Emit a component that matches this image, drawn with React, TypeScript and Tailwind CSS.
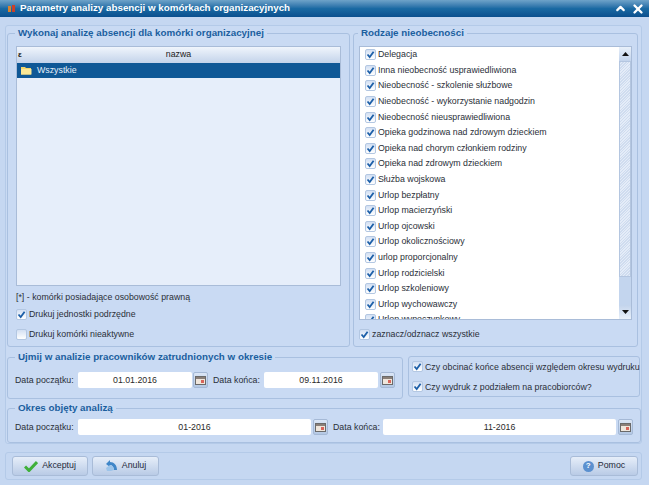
import React from 'react';
import { ChevronUp, X } from 'lucide-react';

const absences = [
  'Delegacja',
  'Inna nieobecność usprawiedliwiona',
  'Nieobecność - szkolenie służbowe',
  'Nieobecność - wykorzystanie nadgodzin',
  'Nieobecność nieusprawiedliwiona',
  'Opieka godzinowa nad zdrowym dzieckiem',
  'Opieka nad chorym członkiem rodziny',
  'Opieka nad zdrowym dzieckiem',
  'Służba wojskowa',
  'Urlop bezpłatny',
  'Urlop macierzyński',
  'Urlop ojcowski',
  'Urlop okolicznościowy',
  'urlop proporcjonalny',
  'Urlop rodzicielski',
  'Urlop szkoleniowy',
  'Urlop wychowawczy',
  'Urlop wypoczynkowy',
];

const CheckBox = ({ checked = true }: { checked?: boolean }) => (
  <span className="flex h-[11px] w-[11px] shrink-0 items-center justify-center rounded-[2px] border border-[#b3c7e2] bg-gradient-to-b from-[#d3e0f3] to-white">
    {checked && (
      <svg width="9" height="9" viewBox="0 0 9 9">
        <path d="M1.5 4.5 L3.7 7 L7.6 1.8" fill="none" stroke="#1c5fa8" strokeWidth="1.8" />
      </svg>
    )}
  </span>
);

const CalendarButton = () => (
  <button className="flex h-[16px] w-[15px] shrink-0 items-center justify-center rounded-[2px] border border-[#a5b9d6] bg-gradient-to-b from-[#dbe6f6] to-[#b4c8e4]">
    <svg width="11" height="9" viewBox="0 0 11 9">
      <rect x="0.5" y="0.5" width="10" height="8" fill="#efe6dc" stroke="#6a6a6a" />
      <rect x="1" y="1" width="9" height="2" fill="#8a7f78" />
      <rect x="6" y="4" width="3" height="3" fill="#d8645a" />
    </svg>
  </button>
);

const DateInput = ({ value, className }: { value: string; className: string }) => (
  <div className={`flex h-[16px] items-center justify-center rounded-[2px] bg-white text-[#2a2a2a] ${className}`}>{value}</div>
);

const Group = ({ title, className, legendClass = 'ml-[7px]', children }: { title: string; className: string; legendClass?: string; children: React.ReactNode }) => (
  <fieldset className={`rounded-[3px] border border-[#a9c0e0] ${className}`}>
    <legend className={`px-[3px] text-[9.8px] leading-[12px] font-bold text-[#1b5f9f] ${legendClass}`}>{title}</legend>
    {children}
  </fieldset>
);

const ActionButton = ({ icon, label, className }: { icon: React.ReactNode; label: string; className: string }) => (
  <button className={`flex h-[20px] items-center justify-center gap-[4px] rounded-[3px] border border-[#a9bcd8] bg-gradient-to-b from-[#e6eef9] to-[#b9cbe6] text-[#1f2a3a] ${className}`}>
    {icon}
    {label}
  </button>
);

export default function App() {
  return (
    <div className="flex h-[485px] w-[649px] flex-col overflow-hidden bg-[#c5d7f1] font-['Liberation_Sans',sans-serif] text-[8.8px] text-[#2a2f38]">
      {/* title bar */}
      <div className="flex h-[17px] shrink-0 items-center bg-gradient-to-b from-[#6ea3c9] via-[#1a6aa3] to-[#0b4f8e] pl-[7px] pr-[4px] text-[9.8px] font-bold text-white">
        <svg width="9" height="9" viewBox="0 0 9 9" className="mr-[4px]">
          <rect x="1" y="2" width="3" height="6" fill="#d9822b" />
          <rect x="5" y="1" width="3" height="7" fill="#c9402a" />
        </svg>
        <span>Parametry analizy absencji w komórkach organizacyjnych</span>
        <ChevronUp className="ml-auto mr-[4px] h-[13px] w-[13px] text-white" strokeWidth={4} />
        <X className="h-[14px] w-[14px] text-white" strokeWidth={4} />
      </div>

      <div className="ml-[5px] mt-[8px] flex h-[419px] w-[637px] flex-col rounded-[3px] border border-[#b4cae8] bg-[#c9daf3] px-[1px] pt-[1px]">
        <div className="flex h-[322px] gap-[3px]">
          <Group title="Wykonaj analizę absencji dla komórki organizacyjnej" className="flex h-[320px] w-[343px] flex-col">
            <div className="flex flex-col px-[8px] pt-[7px]">
              <div className="flex h-[240px] flex-col border border-[#a9bcd8] bg-[#e6eefa]">
                <div className="relative flex h-[16px] items-center justify-center bg-gradient-to-b from-[#f0f5fc] to-[#c3d3ea] text-[#222]">
                  <span className="absolute left-[1px] text-[8px] font-bold">ε</span>
                  nazwa
                </div>
                <div className="flex h-[15px] items-center gap-[5px] bg-[#0f5896] pl-[4px] text-[#e8f0fa]">
                  <svg width="11" height="9" viewBox="0 0 11 9">
                    <path d="M0 1 H4 L5 2 H10 V8.5 H0 Z" fill="#f4d568" />
                    <rect x="0" y="3" width="10.5" height="5.5" fill="#fbe896" />
                  </svg>
                  Wszystkie
                </div>
              </div>
              <div className="mt-[5px] leading-[12px]">[*] - komórki posiadające osobowość prawną</div>
              <label className="mt-[5px] flex items-center gap-[2px] leading-[12px]">
                <CheckBox />
                Drukuj jednostki podrzędne
              </label>
              <label className="mt-[8px] flex items-center gap-[2px] leading-[12px]">
                <CheckBox checked={false} />
                Drukuj komórki nieaktywne
              </label>
            </div>
          </Group>

          <Group title="Rodzaje nieobecności" legendClass="ml-[4px]" className="flex h-[320px] w-[285px] flex-col">
            <div className="flex flex-col px-[5px] pt-[7px]">
              <div className="flex h-[274px] overflow-hidden border border-[#a9bcd8] bg-white">
                <div className="min-w-0 flex-1 overflow-hidden pl-[5px]">
                  {absences.map((name) => (
                    <div key={name} className="flex h-[15.6px] items-center gap-[2px] whitespace-nowrap">
                      <CheckBox />
                      {name}
                    </div>
                  ))}
                </div>
                <div className="flex w-[12px] shrink-0 flex-col bg-[#c3d5ee]">
                  <div className="flex h-[14px] items-center justify-center bg-gradient-to-b from-[#e8f0fa] to-[#c3d4ec] text-[#111]">
                    <svg width="7" height="4" viewBox="0 0 7 4"><path d="M3.5 0 L7 4 H0 Z" fill="#111" /></svg>
                  </div>
                  <div className="h-[216px] border border-[#b4c6e0] bg-[repeating-linear-gradient(135deg,#cfdcef_0,#cfdcef_1px,#e4ecf8_1px,#e4ecf8_2px)]" />
                  <div className="flex-1" />
                  <div className="flex h-[14px] items-center justify-center bg-gradient-to-b from-[#c3d4ec] to-[#e8f0fa]">
                    <svg width="7" height="4" viewBox="0 0 7 4"><path d="M0 0 H7 L3.5 4 Z" fill="#111" /></svg>
                  </div>
                </div>
              </div>
              <label className="mt-[8px] flex items-center gap-[2px] leading-[12px]">
                <CheckBox />
                zaznacz/odznacz wszystkie
              </label>
            </div>
          </Group>
        </div>

        <div className="mt-[3px] flex h-[49px] gap-[5px]">
          <Group title="Ujmij w analizie pracowników zatrudnionych w okresie" className="h-[48px] w-[394px]">
            <div className="flex items-start px-[7px] pt-[9px]">
              <span className="w-[63px] leading-[16px] whitespace-nowrap">Data początku:</span>
              <DateInput value="01.01.2016" className="w-[114px]" />
              <span className="ml-[1px]"><CalendarButton /></span>
              <span className="ml-[5px] w-[51px] leading-[16px] whitespace-nowrap">Data końca:</span>
              <DateInput value="09.11.2016" className="w-[114px]" />
              <span className="ml-[2px]"><CalendarButton /></span>
            </div>
          </Group>
          <div className="mt-[5px] flex h-[41px] w-[232px] flex-col justify-center gap-[8px] rounded-[3px] border border-[#a9c0e0] pl-[3px]">
            <label className="flex items-center gap-[2px] leading-[12px] whitespace-nowrap">
              <CheckBox />
              Czy obcinać końce absencji względem okresu wydruku
            </label>
            <label className="flex items-center gap-[2px] leading-[12px] whitespace-nowrap">
              <CheckBox />
              Czy wydruk z podziałem na pracobiorców?
            </label>
          </div>
        </div>

        <Group title="Okres objęty analizą" className="mt-[2px] h-[41px] w-[631px]">
          <div className="flex items-start px-[7px] pt-[5px]">
            <span className="w-[63px] leading-[16px] whitespace-nowrap">Data początku:</span>
            <DateInput value="01-2016" className="w-[233px]" />
            <span className="ml-[2px]"><CalendarButton /></span>
            <span className="ml-[5px] w-[50px] leading-[16px] whitespace-nowrap">Data końca:</span>
            <DateInput value="11-2016" className="w-[233px]" />
            <span className="ml-[2px]"><CalendarButton /></span>
          </div>
        </Group>
      </div>

      <div className="ml-[5px] mt-[8px] flex h-[28px] w-[637px] items-center gap-[4px] rounded-[3px] border border-[#b4cae8] pl-[6px] pr-[3px]">
        <ActionButton
          className="w-[76px]"
          label="Akceptuj"
          icon={
            <svg width="14" height="12" viewBox="0 0 14 12">
              <path d="M1 6.5 L5 10.5 L13 2" fill="none" stroke="#3fb03a" strokeWidth="3" />
            </svg>
          }
        />
        <ActionButton
          className="w-[67px]"
          label="Anuluj"
          icon={
            <svg width="13" height="12" viewBox="0 0 13 12">
              <path d="M12 10 C12 5 9 2 5 2 L5 0 L1 4 L5 7 L5 5 C7 5 9 7 9 10 Z" fill="#3f86c8" />
              <path d="M9 10 C9 7 7 5 5 5 L1 8 L2 11 H6 Z" fill="#9cc4ea" />
            </svg>
          }
        />
        <ActionButton
          className="ml-auto w-[68px]"
          label="Pomoc"
          icon={
            <span className="flex h-[11px] w-[11px] items-center justify-center rounded-full bg-[#5b90cf] text-[8px] font-bold text-white">?</span>
          }
        />
      </div>
    </div>
  );
}
